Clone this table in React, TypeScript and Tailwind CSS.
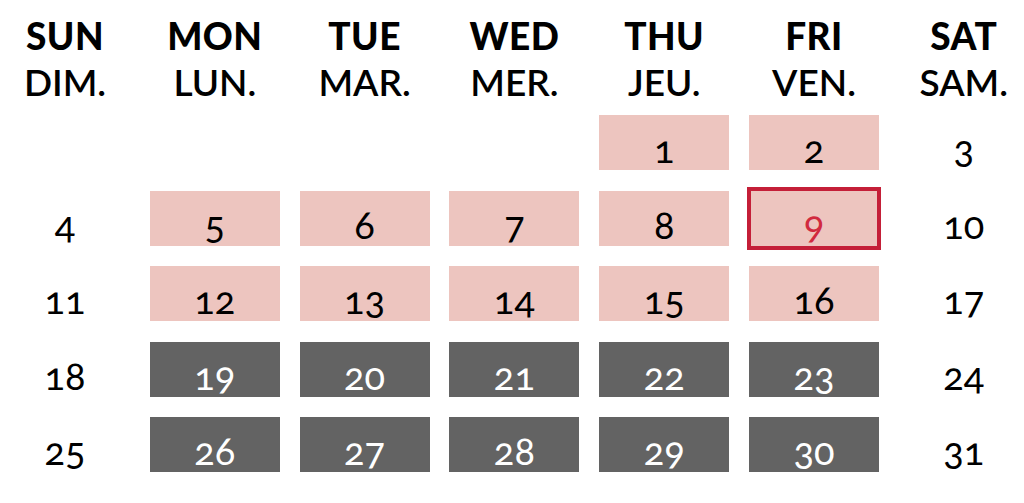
const days = [
  { en: "SUN", fr: "DIM." },
  { en: "MON", fr: "LUN." },
  { en: "TUE", fr: "MAR." },
  { en: "WED", fr: "MER." },
  { en: "THU", fr: "JEU." },
  { en: "FRI", fr: "VEN." },
  { en: "SAT", fr: "SAM." },
];

type Cell = { n?: number; kind: "plain" | "pink" | "gray" | "today" };

const weeks: Cell[][] = [
  [
    { kind: "plain" },
    { kind: "plain" },
    { kind: "plain" },
    { kind: "plain" },
    { n: 1, kind: "pink" },
    { n: 2, kind: "pink" },
    { n: 3, kind: "plain" },
  ],
  [
    { n: 4, kind: "plain" },
    { n: 5, kind: "pink" },
    { n: 6, kind: "pink" },
    { n: 7, kind: "pink" },
    { n: 8, kind: "pink" },
    { n: 9, kind: "today" },
    { n: 10, kind: "plain" },
  ],
  [
    { n: 11, kind: "plain" },
    { n: 12, kind: "pink" },
    { n: 13, kind: "pink" },
    { n: 14, kind: "pink" },
    { n: 15, kind: "pink" },
    { n: 16, kind: "pink" },
    { n: 17, kind: "plain" },
  ],
  [
    { n: 18, kind: "plain" },
    { n: 19, kind: "gray" },
    { n: 20, kind: "gray" },
    { n: 21, kind: "gray" },
    { n: 22, kind: "gray" },
    { n: 23, kind: "gray" },
    { n: 24, kind: "plain" },
  ],
  [
    { n: 25, kind: "plain" },
    { n: 26, kind: "gray" },
    { n: 27, kind: "gray" },
    { n: 28, kind: "gray" },
    { n: 29, kind: "gray" },
    { n: 30, kind: "gray" },
    { n: 31, kind: "plain" },
  ],
];

const DayCell = ({ cell }: { cell: Cell }) => {
  const bg =
    cell.kind === "pink" || cell.kind === "today"
      ? "bg-[#edc5bf]"
      : cell.kind === "gray"
        ? "bg-[#636363]"
        : "";
  const color =
    cell.kind === "gray" ? "text-white" : cell.kind === "today" ? "text-[#d12a3e]" : "text-black";
  return (
    <div className={`relative flex h-[55px] items-end justify-center pb-[3px] ${bg}`}>
      {cell.kind === "today" && (
        <div className="pointer-events-none absolute -inset-x-[2px] -inset-y-[4px] border-4 border-[#c41f38]"></div>
      )}
      <span className={`text-[38px] leading-none oldstyle-nums ${color}`}>{cell.n ?? ""}</span>
    </div>
  );
};

export default function App() {
  return (
    <div className="h-[503px] w-[1024px] overflow-hidden bg-white pt-[13px] font-['Lato','Liberation_Sans',sans-serif]">
      <div className="grid grid-cols-[repeat(7,130px)] gap-x-[19.8px]">
        {days.map((d) => (
          <div key={d.en} className="text-center text-[37px] leading-[46px] text-black">
            <div className="font-black tracking-[0.5px]">{d.en}</div>
            <div className="font-semibold">{d.fr}</div>
          </div>
        ))}
      </div>
      <div className="mt-[10px] grid grid-cols-[repeat(7,130px)] gap-x-[19.8px] gap-y-[20.5px]">
        {weeks.flatMap((w, wi) => w.map((c, ci) => <DayCell key={`${wi}-${ci}`} cell={c} />))}
      </div>
    </div>
  );
}
